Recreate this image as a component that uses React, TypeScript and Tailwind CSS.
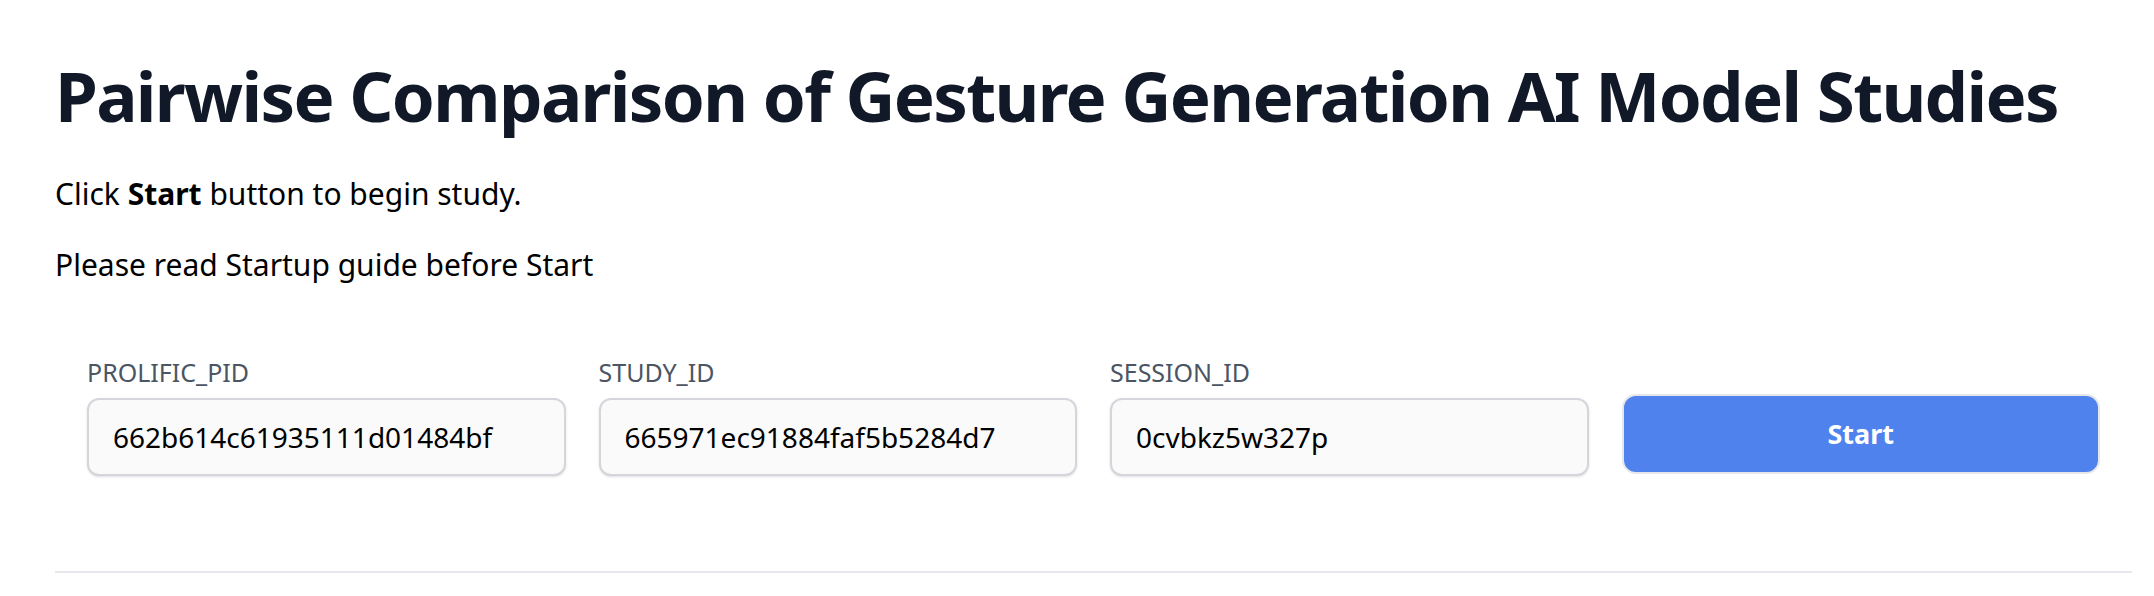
import React from 'react';

export default function App() {
  const fields = [
    { label: 'PROLIFIC_PID', value: '662b614c61935111d01484bf' },
    { label: 'STUDY_ID', value: '665971ec91884faf5b5284d7' },
    { label: 'SESSION_ID', value: '0cvbkz5w327p' },
  ];

  return (
    <div className="min-h-screen bg-white font-['Noto_Sans',sans-serif] text-black">
      <div className="pl-[55px] pr-[22px] pt-[61px]">
        {/* Header */}
        <h1 className="text-[69px] leading-none font-bold tracking-[-0.024em] text-[#111827] whitespace-nowrap">
          Pairwise Comparison of Gesture Generation AI Model Studies
        </h1>
        <p className="mt-[42px] text-[30px] leading-[44px]">
          Click <strong className="font-bold">Start</strong> button to begin study.
        </p>
        <p className="mt-[27px] text-[30px] leading-[44px]">Please read Startup guide before Start</p>

        {/* Participant form */}
        <div className="mt-[69px] px-[32px] grid grid-cols-4 gap-[33px] items-end">
          {fields.map((field) => (
            <div key={field.label} className="flex flex-col">
              <label className="text-[25px] leading-[32px] text-[#4b5563]">{field.label}</label>
              <input
                readOnly
                value={field.value}
                className="mt-[10px] h-[78px] w-full rounded-[12px] border-2 border-[#d4d6db] bg-[#fafafa] px-[24px] text-[28px] text-black shadow-sm outline-none"
              />
            </div>
          ))}
          <div className="flex">
            <button className="mb-[2px] h-[80px] w-full rounded-[14px] border-2 border-[#e5e7eb] bg-[#4f82ec] text-[27px] font-bold text-white">
              Start
            </button>
          </div>
        </div>

        <hr className="mt-[95px] border-t-2 border-[#e5e7eb]" />
      </div>
    </div>
  );
}
